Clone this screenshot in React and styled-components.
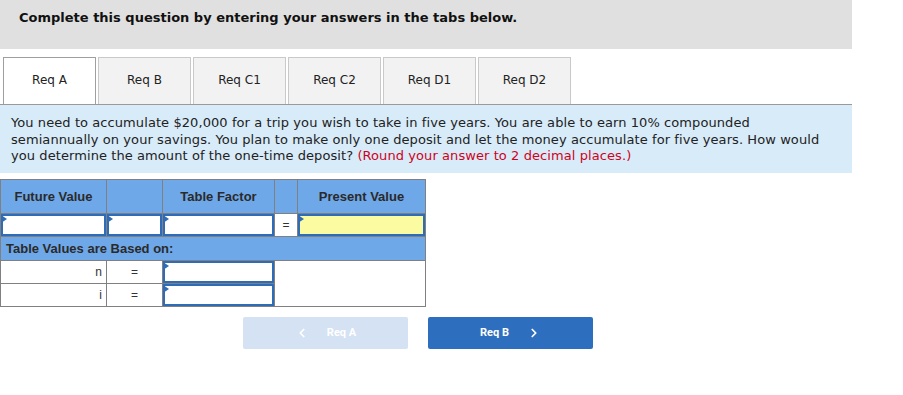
import React from 'react';
import styled, { createGlobalStyle } from 'styled-components';
import { FiChevronLeft, FiChevronRight } from 'react-icons/fi';

const GlobalStyle = createGlobalStyle`
  body {
    margin: 0;
    background: #ffffff;
    font-family: "DejaVu Sans", Verdana, sans-serif;
  }
`;

const Page = styled.div`
  width: 903px;
  height: 395px;
  overflow: hidden;
`;

const Banner = styled.div`
  width: 852px;
  height: 49px;
  background: #e0e0e0;
  box-sizing: border-box;
  padding: 10px 0 0 19px;
  font-size: 13px;
  font-weight: bold;
  color: #111;
`;

const TabBar = styled.div`
  display: flex;
  gap: 2px;
  width: 852px;
  margin-top: 8px;
  padding-left: 3px;
  box-sizing: border-box;
  border-bottom: 1px solid #9a9a9a;
`;

const Tab = styled.button`
  width: 93px;
  height: 47px;
  box-sizing: border-box;
  border: 1px solid ${p => (p.active ? '#9f9f9f' : '#c9c9c9')};
  border-bottom: none;
  background: ${p => (p.active ? '#ffffff' : '#f2f2f2')};
  font-family: "DejaVu Sans", Verdana, sans-serif;
  font-size: 12px;
  color: #222;
  padding: 0;
  padding-bottom: 2px;
  cursor: pointer;
`;

const Question = styled.div`
  width: 852px;
  box-sizing: border-box;
  background: #d8ebf9;
  padding: 10px 8px 8px 11px;
  font-size: 13px;
  line-height: 16.5px;
  letter-spacing: 0.08px;
  color: #222;
`;

const Hint = styled.span`
  color: #d0021b;
`;

const Grid = styled.table`
  margin-top: 6px;
  border-collapse: collapse;
  border: 1px solid #808080;
  font-family: "Liberation Sans", Arial, sans-serif;
  table-layout: fixed;
  width: 425px;
`;

const HeadCell = styled.td`
  background: #6fa8e8;
  border: 1px solid #808080;
  height: 33px;
  padding: 0;
  text-align: center;
  font-size: 13px;
  font-weight: bold;
  color: #2a2a2a;
`;

const Cell = styled.td`
  border: 1px solid #808080;
  padding: 0;
  height: 22px;
  text-align: ${p => p.align || 'center'};
  font-size: 12px;
  color: #333;
  background: #fff;
  padding-right: ${p => (p.align === 'right' ? 4 : 0)}px;
  vertical-align: middle;
`;

const SectionCell = styled.td`
  background: #6fa8e8;
  border: 1px solid #808080;
  height: 23px;
  padding: 0 0 0 5px;
  font-size: 13px;
  font-weight: bold;
  color: #2a2a2a;
`;

const InputCell = styled.td`
  border: 1px solid #808080;
  padding: 0;
  height: 22px;
  background: #fff;
`;

const FieldWrap = styled.div`
  position: relative;
  height: 22px;
`;

const Field = styled.input`
  display: block;
  width: 100%;
  height: 22px;
  box-sizing: border-box;
  border: 2px solid #2e6cb8;
  background: ${p => (p.highlight ? '#fbfca2' : '#ffffff')};
  outline: none;
  margin: 0;
`;

const Marker = styled.span`
  position: absolute;
  left: 0;
  top: 1px;
  width: 0;
  height: 0;
  border-top: 4px solid transparent;
  border-bottom: 4px solid transparent;
  border-left: 6px solid #2e6cb8;
`;

const Actions = styled.div`
  display: flex;
  gap: 20px;
  padding-left: 243px;
  margin-top: 10px;
`;

const NavButton = styled.button`
  width: 165px;
  height: 32px;
  border: none;
  border-radius: 2px;
  background: ${p => (p.disabled ? '#d5e2f3' : '#2d6fbe')};
  color: #ffffff;
  font-family: "Roboto", "Liberation Sans", sans-serif;
  font-size: 11px;
  font-weight: bold;
  display: flex;
  align-items: center;
  justify-content: center;
  gap: 18px;
  padding: 0;
  cursor: ${p => (p.disabled ? 'default' : 'pointer')};
`;

const InputBox = ({ highlight }) => (
  <FieldWrap>
    <Field highlight={highlight} />
    <Marker />
  </FieldWrap>
);

const tabs = ['Req A', 'Req B', 'Req C1', 'Req C2', 'Req D1', 'Req D2'];
const colWidths = [106, 56, 112, 23, 128];

export default function App() {
  return (
    <Page>
      <GlobalStyle />
      <Banner>Complete this question by entering your answers in the tabs below.</Banner>

      <TabBar>
        {tabs.map((t, i) => (
          <Tab key={t} active={i === 0}>{t}</Tab>
        ))}
      </TabBar>

      <Question>
        You need to accumulate $20,000 for a trip you wish to take in five years. You are able to earn 10% compounded<br />
        semiannually on your savings. You plan to make only one deposit and let the money accumulate for five years. How would<br />
        you determine the amount of the one-time deposit? <Hint>(Round your answer to 2 decimal places.)</Hint>
      </Question>

      <Grid>
        <colgroup>
          {colWidths.map((w, i) => (
            <col key={i} style={{ width: w }} />
          ))}
        </colgroup>
        <tbody>
          <tr>
            <HeadCell>Future Value</HeadCell>
            <HeadCell></HeadCell>
            <HeadCell>Table Factor</HeadCell>
            <HeadCell></HeadCell>
            <HeadCell>Present Value</HeadCell>
          </tr>
          <tr>
            <InputCell><InputBox /></InputCell>
            <InputCell><InputBox /></InputCell>
            <InputCell><InputBox /></InputCell>
            <Cell>=</Cell>
            <InputCell><InputBox highlight /></InputCell>
          </tr>
          <tr>
            <SectionCell colSpan={5}>Table Values are Based on:</SectionCell>
          </tr>
          <tr>
            <Cell align="right">n</Cell>
            <Cell>=</Cell>
            <InputCell><InputBox /></InputCell>
            <Cell colSpan={2} rowSpan={2}></Cell>
          </tr>
          <tr>
            <Cell align="right">i</Cell>
            <Cell>=</Cell>
            <InputCell><InputBox /></InputCell>
          </tr>
        </tbody>
      </Grid>

      <Actions>
        <NavButton disabled>
          <FiChevronLeft size={14} strokeWidth={3} />
          <span>Req A</span>
        </NavButton>
        <NavButton>
          <span>Req B</span>
          <FiChevronRight size={14} strokeWidth={3} />
        </NavButton>
      </Actions>
    </Page>
  );
}
